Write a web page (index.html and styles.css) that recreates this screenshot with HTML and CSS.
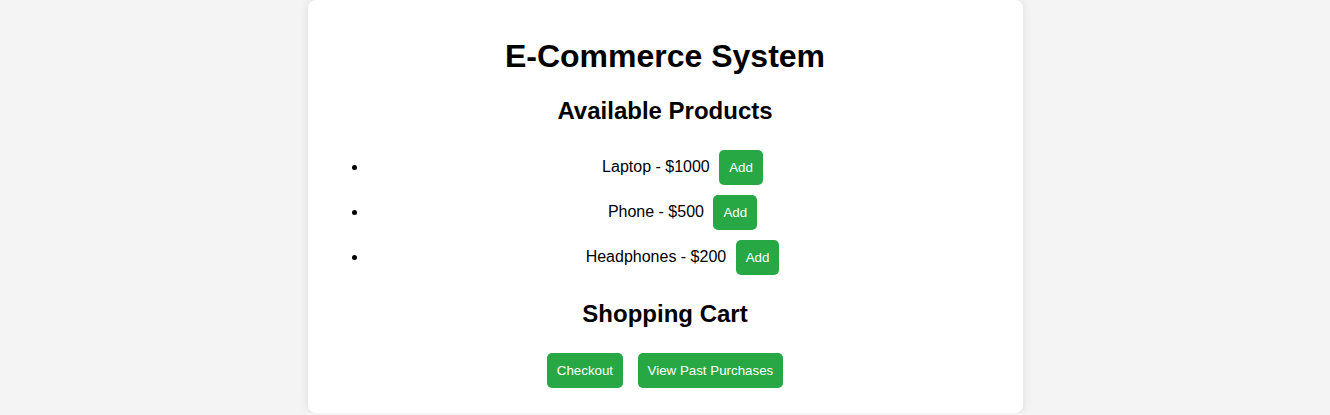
FILE: index.html
```html
<!DOCTYPE html>
<html lang="en">
<head>
<meta charset="UTF-8">
<title>E-Commerce System</title>
<link rel="stylesheet" href="styles.css">
</head>
<body>
<div class="container">
  <h1>E-Commerce System</h1>
  <h2>Available Products</h2>
  <ul class="products">
    <li>Laptop - $1000 <button class="btn">Add</button></li>
    <li>Phone - $500 <button class="btn">Add</button></li>
    <li>Headphones - $200 <button class="btn">Add</button></li>
  </ul>
  <h2>Shopping Cart</h2>
  <ul class="cart"></ul>
  <div class="actions">
    <button class="btn">Checkout</button>
    <button class="btn">View Past Purchases</button>
  </div>
</div>
</body>
</html>
```

FILE: styles.css
```css
html, body {
  margin: 0;
  padding: 0;
}
body {
  background: #f4f4f4;
  font-family: "Liberation Sans", Arial, sans-serif;
  text-align: center;
  color: #000;
}
.container {
  width: 715px;
  box-sizing: border-box;
  margin: 0 auto;
  background: #fff;
  padding: 17px 20px 20px;
  border-radius: 8px;
  box-shadow: 0 0 10px rgba(0, 0, 0, 0.1);
}
h1 {
  font-size: 32px;
  margin: 21.44px 0;
}
h2 {
  font-size: 24px;
  margin: 19.92px 0;
}
.products {
  margin: 16px 0;
  padding-left: 40px;
}
.cart {
  margin: 0;
  padding: 0;
}
.btn {
  background: #28a745;
  color: #fff;
  border: none;
  border-radius: 5px;
  padding: 10px;
  margin: 5px;
  font-family: "Liberation Sans", Arial, sans-serif;
  font-size: 13.333px;
  cursor: pointer;
}
```
